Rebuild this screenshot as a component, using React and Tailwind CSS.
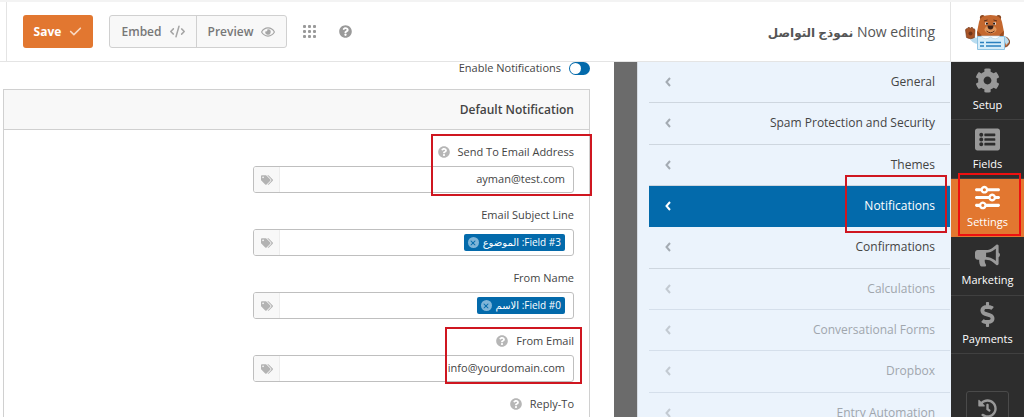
import { useState } from "react";
import {
  FaBullhorn,
  FaCog,
  FaDollarSign,
  FaHistory,
  FaListAlt,
  FaQuestionCircle,
  FaRegEye,
  FaTags,
} from "react-icons/fa";
import { FaCheck, FaCode, FaSliders, FaXmark } from "react-icons/fa6";

const toolbar = [
  { name: "Setup", Icon: FaCog },
  { name: "Fields", Icon: FaListAlt },
  { name: "Settings", Icon: FaSliders },
  { name: "Marketing", Icon: FaBullhorn },
  { name: "Payments", Icon: FaDollarSign },
];

const sections = [
  { name: "General" },
  { name: "Spam Protection and Security" },
  { name: "Themes" },
  { name: "Notifications" },
  { name: "Confirmations" },
  { name: "Calculations", locked: true },
  { name: "Conversational Forms", locked: true },
  { name: "Dropbox", locked: true },
  { name: "Entry Automation", locked: true },
];

function Bear() {
  return (
    <svg viewBox="0 0 46 36" className="h-9 w-[46px]" aria-hidden="true">
      <circle cx="39.500" cy="28" r="5" fill="#b5683a" stroke="#7b4426" />
      <path d="M4 23q3 7 9 7v-6l-5-1z" fill="#b9dcef" />
      <path d="M38 22q5 1 6 6l-3 3z" fill="#b9dcef" />
      <path
        d="M.5 16q0-1.500 2-1.500l.5-1h1.500l.5 1 1-1h1.500l.5 1.500q2-1 2 1.500l-.5 7q-4 2.500-8 0z"
        fill="#a85427"
        stroke="#6f3519"
        strokeWidth=".6"
      />
      <circle cx="5.500" cy="19.500" r="2" fill="#6f3519" />
      <circle cx="17.500" cy="3.500" r="2.600" fill="#8a471f" />
      <circle cx="33.500" cy="3.500" r="2.600" fill="#8a471f" />
      <path d="M14 8q1-7 11.500-7T37 8l2 10q.5 7-13.500 7T12 18z" fill="#c4682f" />
      <path d="M12.300 17q5 4 7 8l-7-2zM38.700 17q-5 4-7 8l7-2z" fill="#9c4d20" />
      <ellipse cx="25.500" cy="15.500" rx="6" ry="4" fill="#e0955a" />
      <path d="M22.500 11.500h6q0 4-3 4t-3-4z" fill="#3a2018" />
      <path d="M21.500 17q4 3.500 8 0" fill="none" stroke="#5b2d17" />
      <circle cx="21.500" cy="9.500" r="1.500" fill="#fff" />
      <circle cx="29.500" cy="9.500" r="1.500" fill="#fff" />
      <circle cx="21.900" cy="9.700" r="1.100" fill="#28150e" />
      <circle cx="29.100" cy="9.700" r="1.100" fill="#28150e" />
      <path d="M19 7l3.500-1M32 7l-3.500-1" stroke="#5b2d17" />
      <path d="M12.500 22.500h27v13h-27z" fill="#d6edf9" stroke="#8fc4e3" />
      <path d="M16 22q4 5 9.500 1 5.500 4 9.500-1z" fill="#fff" stroke="#b7cfdb" strokeWidth=".6" />
      <path d="M15 28.500h4M21 28.500h15M15 32h4M21 32h15" stroke="#2a80be" strokeWidth="1.600" />
    </svg>
  );
}

function Help() {
  return (
    <button type="button" aria-label="Help" className="text-[12px] text-[#b6b6b6]">
      <FaQuestionCircle />
    </button>
  );
}

function Field({ id, label, help, value, tag, highlight }) {
  return (
    <div className="relative mb-3 w-[321px] max-w-full">
      <div className="flex h-5 items-center gap-2">
        <label htmlFor={id}>{label}</label>
        {help && <Help />}
      </div>
      <div className="mt-1 flex h-[27px] overflow-hidden rounded-[3px] border border-[#bfbfbf] bg-white">
        {tag ? (
          <div id={id} className="flex min-w-0 flex-1 items-center ps-2">
            <span className="flex h-[17px] items-center gap-1 rounded-[2px] bg-[#036aab] px-1 text-[10px] text-white">
              {tag}
              <button
                type="button"
                aria-label="Remove"
                className="flex size-[11px] items-center justify-center rounded-full bg-[#7fb5d8] text-[8px] text-[#036aab]"
              >
                <FaXmark />
              </button>
            </span>
          </div>
        ) : (
          <input id={id} defaultValue={value} className="min-w-0 flex-1 ps-2 outline-none" />
        )}
        <button
          type="button"
          aria-label="Smart tags"
          className="flex w-[26px] items-center justify-center border-s border-[#ededed] bg-[#f8f8f8] text-[12px] text-[#b3b3b3]"
        >
          <FaTags />
        </button>
      </div>
      {highlight && <span className={`pointer-events-none absolute border-2 border-[#cf1620] ${highlight}`} />}
    </div>
  );
}

export default function App() {
  const [view, setView] = useState("Settings");
  const [section, setSection] = useState("Notifications");
  const [enabled, setEnabled] = useState(true);

  return (
    <div
      dir="rtl"
      className="flex h-screen flex-col overflow-hidden bg-white font-['Open_Sans','Noto_Sans','DejaVu_Sans',sans-serif] text-[11px] text-[#444]"
    >
      <header className="flex h-[62px] shrink-0 border-t-2 border-b border-t-[#f3f3f3] border-b-[#e4e4e4]">
        <div className="flex w-[74px] items-center justify-center border-e border-[#e4e4e4]">
          <Bear />
        </div>
        <h1 className="flex-1 self-center ps-[15px] text-[14px] text-[#555]">
          Now editing <b className="text-[12px] font-semibold">نموذج التواصل</b>
        </h1>
        <div className="flex items-center text-[#9a9a9a]">
          <button type="button" aria-label="Help" className="text-[13px]">
            <FaQuestionCircle />
          </button>
          <button type="button" aria-label="Keyboard shortcuts" className="ms-[23px]">
            <svg viewBox="0 0 13 13" className="size-[13px]" fill="currentColor">
              {[0, 5, 10].map((y) =>
                [0, 5, 10].map((x) => <rect key={`${x}-${y}`} x={x} y={y} width="3" height="3" rx="1" />)
              )}
            </svg>
          </button>
          <div className="ms-4 flex h-[33px] rounded-[3px] border border-[#d0d0d0] bg-[#f8f8f8] text-[12px] font-semibold text-[#777]">
            <button type="button" className="flex w-[89px] items-center justify-center gap-2">
              Preview
              <FaRegEye className="-order-1 text-[14px] text-[#a6a6a6]" />
            </button>
            <button type="button" className="flex w-[87px] items-center justify-center gap-2 border-s border-[#d0d0d0]">
              <FaCode className="text-[15px] text-[#a6a6a6]" />
              Embed
            </button>
          </div>
          <button
            type="button"
            className="ms-4 flex h-[33px] w-[70px] items-center justify-center gap-2 rounded-[3px] bg-[#e27730] text-[12px] font-bold text-white"
          >
            <FaCheck className="text-[13px] text-[#f8d9c3]" />
            Save
          </button>
        </div>
        <div className="ms-4 w-[7px] border-s border-[#e4e4e4]" />
      </header>

      <div className="flex min-h-0 flex-1">
        <nav className="flex w-[73px] shrink-0 flex-col items-center overflow-hidden bg-[#2d2d2d] text-[11px] text-white">
          <div className="flex h-[292px] w-full shrink-0 flex-col">
            {toolbar.map(({ name, Icon }) => (
              <button
                key={name}
                type="button"
                onClick={() => setView(name)}
                className={`relative flex flex-1 flex-col items-center justify-center gap-1 border-b ${
                  view === name ? "border-[#e27730] bg-[#e27730]" : "border-[#404040]"
                }`}
              >
                <Icon className={`text-[25px] ${view === name ? "text-white" : "text-[#999]"}`} />
                <span className="leading-4">{name}</span>
                {name === "Settings" && (
                  <span className="pointer-events-none absolute -top-1.5 right-[3px] bottom-0 left-[7px] border-2 border-[#ee1010]" />
                )}
              </button>
            ))}
          </div>
          <button
            type="button"
            aria-label="Revisions"
            className="mt-[37px] flex size-[43px] shrink-0 items-start justify-center rounded-[3px] border border-[#4a4a4a] pt-[7px] text-[19px] text-[#999]"
          >
            <FaHistory />
          </button>
        </nav>

        <aside className="w-[314px] shrink-0 overflow-hidden border-e border-[#d5dbe2] bg-[#ebf3fc] ps-px">
          <ul className="flex h-[372px] flex-col pe-[11px] text-[12px] text-[#444]">
            {sections.map(({ name, locked }) => (
              <li key={name} className="flex flex-1">
                <button
                  type="button"
                  onClick={() => setSection(name)}
                  className={`relative flex flex-1 items-center justify-between border-b ps-[15px] pe-4 ${
                    section === name
                      ? "border-[#036aab] bg-[#036aab] text-white"
                      : locked
                        ? "border-[#d5dfeb] text-[#a0a6ad]"
                        : "border-[#ced6df]"
                  }`}
                >
                  {name}
                  <svg
                    viewBox="0 0 6 10"
                    className={`h-2.5 w-1.5 fill-none stroke-current ${
                      section === name ? "text-white" : locked ? "text-[#c3cad2]" : "text-[#a4abb3]"
                    }`}
                    strokeWidth="2"
                  >
                    <path d="M5 1 1.500 5 5 9" />
                  </svg>
                  {name === "Notifications" && (
                    <span className="pointer-events-none absolute -top-[11px] right-[3px] -bottom-[7px] w-[102px] border-2 border-[#cf1620]" />
                  )}
                </button>
              </li>
            ))}
          </ul>
        </aside>
        <div className="w-[23px] shrink-0 bg-[#6b6b6b]" />

        <main className="min-w-0 flex-1 overflow-hidden ps-6 pe-[3px]">
          <div className="flex h-3 items-center gap-2 leading-3">
            <input
              id="enable"
              type="checkbox"
              checked={enabled}
              onChange={(e) => setEnabled(e.target.checked)}
              className="relative h-[13px] w-[21px] appearance-none rounded-full bg-[#bbb] before:absolute before:top-px before:right-px before:size-[11px] before:rounded-full before:bg-white checked:bg-[#036aab] checked:before:right-[9px]"
            />
            <label htmlFor="enable">Enable Notifications</label>
          </div>

          <section className="mt-[15px] border border-[#d0d0d0]">
            <h2 className="flex h-10 items-center border-b border-[#d0d0d0] bg-[#f8f8f8] ps-[15px] text-[12px] font-semibold">
              Default Notification
            </h2>
            <div className="ps-[15px] pt-3">
              <Field
                id="to"
                label="Send To Email Address"
                help
                value="ayman@test.com"
                highlight="-top-2 -right-[18px] h-[62px] w-[161px]"
              />
              <Field id="subject" label="Email Subject Line" tag="Field #3: الموضوع" />
              <Field id="name" label="From Name" tag="Field #0: الاسم" />
              <Field
                id="from"
                label="From Email"
                help
                value="info@yourdomain.com"
                highlight="-top-1 -right-2 h-[57px] w-[137px]"
              />
              <Field id="reply" label="Reply-To" help value="" />
            </div>
          </section>
        </main>
      </div>
    </div>
  );
}
